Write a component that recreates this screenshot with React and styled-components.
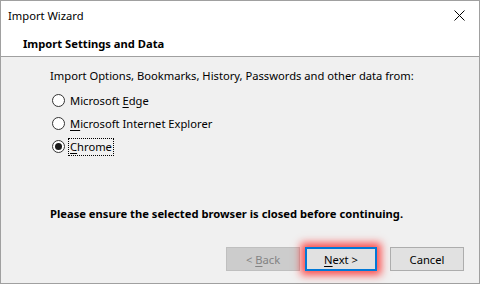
import React from "react";
import styled, { createGlobalStyle } from "styled-components";

const Global = createGlobalStyle`
  html, body { margin: 0; padding: 0; background: #ffffff; }
  body { font-family: "Noto Sans", "Open Sans", sans-serif; font-size: 11.2px; color: #000; }
  * { box-sizing: border-box; }
`;

const Window = styled.div`
  width: 480px;
  height: 284px;
  border: 1px solid #a0a0a0;
  display: flex;
  flex-direction: column;
  background: #f0f0f0;
`;

const Top = styled.div`
  background: #ffffff;
  border-bottom: 1px solid #a0a0a0;
  display: flex;
  flex-direction: column;
`;

const TitleBar = styled.div`
  height: 29px;
  display: flex;
  align-items: center;
  justify-content: space-between;
  padding: 0 8px 0 7px;
`;

const Title = styled.span`
  font-size: 11.2px;
  line-height: 16px;
`;

const CloseBtn = styled.div`
  width: 22px;
  height: 22px;
  display: flex;
  align-items: center;
  justify-content: center;
  margin-right: 1px;
`;

const Header = styled.div`
  height: 26px;
  padding: 0 0 0 22px;
  font-weight: 700;
  font-size: 11.2px;
  display: flex;
  align-items: center;
`;

const Body = styled.div`
  flex: 1;
  display: flex;
  flex-direction: column;
  padding: 11px 16px 0 49px;
`;

const Intro = styled.div`
  line-height: 16px;
  margin-bottom: 5px;
`;

const List = styled.div`
  display: flex;
  flex-direction: column;
  margin-left: 2px;
`;

const Row = styled.label`
  height: 23px;
  display: flex;
  align-items: center;
  gap: 3px;
`;

const Circle = styled.span`
  width: 13px;
  height: 13px;
  border-radius: 50%;
  border: 1px solid #333;
  background: #fff;
  display: flex;
  align-items: center;
  justify-content: center;
  &::after {
    content: "";
    width: 7px;
    height: 7px;
    border-radius: 50%;
    background: #1a1a1a;
    display: ${(p) => (p.$on ? "block" : "none")};
  }
`;

const Label = styled.span`
  line-height: 16px;
  padding: 0 1px;
  border: 1px dotted ${(p) => (p.$focus ? "#000" : "transparent")};
  u { text-decoration: underline; text-underline-offset: 2px; }
`;

const Message = styled.div`
  margin-top: 48px;
  font-weight: 700;
  line-height: 16px;
`;

const Footer = styled.div`
  margin-top: auto;
  display: flex;
  justify-content: flex-end;
  padding: 0 15px 12px 0;
  gap: 3px;
`;

const Button = styled.div`
  width: ${(p) => (p.$primary ? "72px" : "74px")};
  height: 24px;
  display: flex;
  align-items: center;
  justify-content: center;
  background: ${(p) => (p.$disabled ? "#cccccc" : "#e1e1e1")};
  border: ${(p) => (p.$primary ? "2px solid #0078d7" : p.$disabled ? "1px solid #bfbfbf" : "1px solid #adadad")};
  color: ${(p) => (p.$disabled ? "#838383" : "#000")};
  box-shadow: ${(p) => (p.$glow ? "0 0 8px 4px rgba(255, 20, 20, 0.75)" : "none")};
  margin-left: ${(p) => p.$ml || "0"};
  u { text-decoration: underline; text-underline-offset: 2px; }
`;

const ButtonText = styled.span`
  white-space: pre;
`;

export default function App() {
  return (
    <>
      <Global />
      <Window>
        <Top>
          <TitleBar>
            <Title>Import Wizard</Title>
            <CloseBtn>
              <svg width="11" height="11" viewBox="0 0 11 11">
                <path d="M0.5 0.5 L10.5 10.5 M10.5 0.5 L0.5 10.5" stroke="#000" strokeWidth="1" />
              </svg>
            </CloseBtn>
          </TitleBar>
          <Header>Import Settings and Data</Header>
        </Top>
        <Body>
          <Intro>Import Options, Bookmarks, History, Passwords and other data from:</Intro>
          <List>
            <Row>
              <Circle />
              <Label>Microsoft <u>E</u>dge</Label>
            </Row>
            <Row>
              <Circle />
              <Label><u>M</u>icrosoft Internet Explorer</Label>
            </Row>
            <Row>
              <Circle $on />
              <Label $focus><u>C</u>hrome</Label>
            </Row>
          </List>
          <Message>Please ensure the selected browser is closed before continuing.</Message>
        </Body>
        <Footer>
          <Button $disabled><ButtonText>{"< "}<u>B</u>ack</ButtonText></Button>
          <Button $primary $glow $ml="2px"><ButtonText><u>N</u>{"ext >"}</ButtonText></Button>
          <Button $ml="10px"><ButtonText>Cancel</ButtonText></Button>
        </Footer>
      </Window>
    </>
  );
}
